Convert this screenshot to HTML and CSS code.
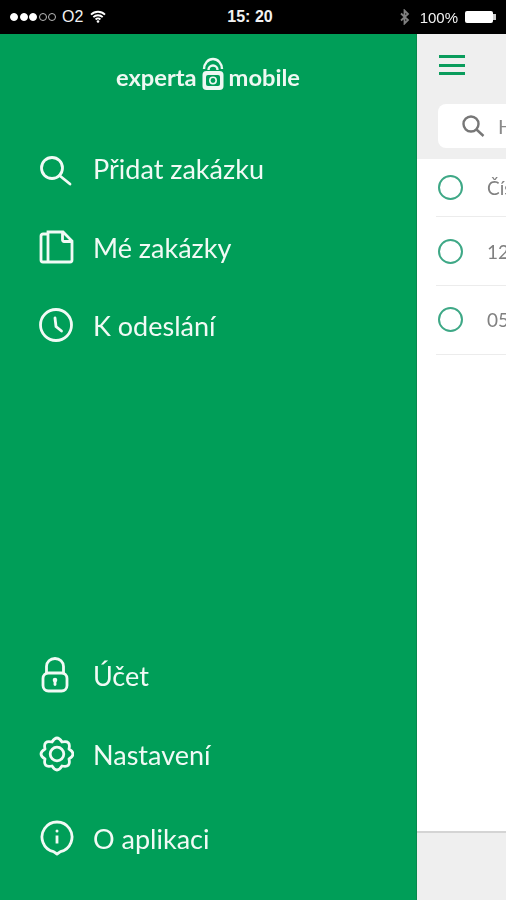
FILE: index.html
```html
<!DOCTYPE html>
<html lang="cs">
  <head>
    <meta charset="UTF-8" />
    <meta name="viewport" content="width=device-width, initial-scale=1.0" />
    <title>Experta mobile</title>
    <link rel="stylesheet" href="styles.css">
  </head>
  <body>
    <header class="status">
      <div class="status-left">
        <span class="signal"><i class="on"></i><i class="on"></i><i class="on"></i><i></i><i></i></span>
        <span class="carrier">O2</span>
        <svg class="wifi" viewBox="0 0 16 13" width="16" height="13"><path d="M1 4.6a10 10 0 0 1 14 0M3.3 7.2a6.6 6.6 0 0 1 9.4 0M5.6 9.5a3.4 3.4 0 0 1 4.8 0" fill="none" stroke="#fff" stroke-width="1.8"/><circle cx="8" cy="11.5" r="1.3" fill="#fff"/></svg>
      </div>
      <div class="status-time">15: 20</div>
      <div class="status-right">
        <svg class="bt" viewBox="0 0 10 16" width="10" height="16"><path d="M1 4.5l7 6.5-3.5 3.5V1.5L8 5l-7 6.500" fill="none" stroke="#808080" stroke-width="1.8"/></svg>
        <span>100%</span>
        <span class="battery"></span>
      </div>
    </header>

    <div class="main">
      <aside class="drawer">
        <div class="logo">
          <span>experta</span>
          <svg viewBox="0 0 22 34" width="22" height="34"><path d="M2 12a9 10 0 0 1 18 0M6.500 13a4.500 4.500 0 0 1 9 0" fill="none" stroke="#eef8f2" stroke-width="2.4"/><rect x="0.5" y="14" width="21" height="19" rx="4" fill="#eef8f2"/><rect x="4" y="18" width="14" height="11" rx="2" fill="#009e58"/><circle cx="11" cy="23.500" r="3.200" fill="none" stroke="#eef8f2" stroke-width="1.6"/></svg>
          <span>mobile</span>
        </div>

        <nav class="menu menu-top">
          <a class="menu-item">
            <svg viewBox="0 0 36 36" width="36" height="36"><circle cx="14" cy="18" r="10.500"/><path d="M21.500 25.500l10.500 8.500"/></svg>
            Přidat zakázku
          </a>
          <a class="menu-item">
            <svg viewBox="0 0 36 36" width="36" height="36"><path d="M10 5H5a2 2 0 0 0-2 2v24a2 2 0 0 0 2 2h27a2 2 0 0 0 2-2V12l-9-9H10v30M24.500 3v8a1.500 1.500 0 0 0 1.500 1.500h8"/></svg>
            Mé zakázky
          </a>
          <a class="menu-item item-clock">
            <svg viewBox="0 0 36 36" width="36" height="36"><circle cx="18" cy="18" r="15.500"/><path d="M17 11l1 8.500 5.500 4.500"/></svg>
            K odeslání
          </a>
        </nav>

        <nav class="menu menu-bottom">
          <a class="menu-item item-lock">
            <svg viewBox="0 0 36 36" width="36" height="36"><path d="M8.500 16V9.500a8.500 8 0 0 1 17 0V16"/><rect x="5" y="16" width="24" height="18" rx="5.500"/><circle cx="17" cy="23" r="2.300" class="fill"/><path d="M17 23v4.500"/></svg>
            Účet
          </a>
          <a class="menu-item item-gear">
            <svg viewBox="0 0 36 36" width="36" height="36"><path d="M14.030 6Q19 -2 23.970 6Q33.140 3.860 31 13.030Q39 18 31 22.970Q33.140 32.140 23.970 30Q19 38 14.030 30Q4.860 32.140 7 22.970Q-1 18 7 13.030Q4.860 3.860 14.030 6z" stroke-linejoin="round"/><circle cx="19" cy="18" r="6.800"/></svg>
            Nastavení
          </a>
          <a class="menu-item item-info">
            <svg viewBox="0 0 36 36" width="36" height="36"><path d="M19 34l-3.500-2.400A15 15 0 1 1 22.500 31.600z" stroke-linejoin="round"/><circle cx="19" cy="11" r="1.500" class="fill"/><path class="stem" d="M19 15.500v8"/></svg>
            O aplikaci
          </a>
        </nav>
      </aside>

      <section class="orders">
        <div class="toolbar">
          <div class="burger"><i></i><i></i><i></i></div>
          <div class="search">
            <svg viewBox="0 0 24 24" width="24" height="24"><circle cx="10" cy="10" r="7.500"/><path d="M15.500 15.500l7 6.500"/></svg>
            <span>H</span>
          </div>
        </div>
        <ul class="list">
          <li class="row row-head"><span class="radio"></span><span>Čís</span></li>
          <li class="row"><span class="radio"></span><span>12</span></li>
          <li class="row"><span class="radio"></span><span>05</span></li>
        </ul>
        <div class="bottom-bar"></div>
      </section>
    </div>
  </body>
</html>
```

FILE: styles.css
```css
*,
*::before,
*::after {
  box-sizing: border-box;
}

html,
body {
  margin: 0;
  height: 900px;
  overflow: hidden;
}

body {
  display: flex;
  flex-direction: column;
  font-family: 'Lato', sans-serif;
  background: #fff;
  filter: blur(0.6px);
}

.status {
  height: 34px;
  flex: none;
  background: #000;
  color: #f2f2f2;
  font-family: 'Liberation Sans', sans-serif;
  font-size: 15px;
  display: grid;
  grid-template-columns: 1fr auto 1fr;
  align-items: center;
  padding: 0 9px 0 10px;
}

.status-left,
.status-right {
  display: flex;
  align-items: center;
  gap: 6px;
}

.status-right {
  justify-content: flex-end;
  gap: 7px;
}

.signal {
  display: flex;
  gap: 1.5px;
}

.signal i {
  width: 8px;
  height: 8px;
  border-radius: 50%;
  border: 1px solid #bbb;
}

.signal i.on {
  background: #fff;
  border-color: #fff;
}

.carrier {
  font-size: 16px;
}

.wifi {
  margin-left: 1px;
  margin-top: -1px;
}

.status-time {
  font-weight: 700;
  font-size: 16px;
  margin-right: 7px;
}

.bt {
  margin-right: 3px;
}

.battery {
  position: relative;
  width: 28px;
  height: 12px;
  background: #fff;
  border-radius: 2px;
  margin-right: 4px;
}

.battery::after {
  content: '';
  position: absolute;
  left: 28px;
  top: 3px;
  width: 3px;
  height: 6px;
  background: #ccc;
}

.main {
  flex: 1;
  display: flex;
  min-height: 0;
}

.drawer {
  width: 417px;
  flex: none;
  background: #009e58;
  border-right: 1px solid #068a4e;
  color: #f1faf5;
  display: flex;
  flex-direction: column;
}

.logo {
  height: 56px;
  margin-top: 15px;
  display: flex;
  justify-content: center;
  align-items: center;
  gap: 5px;
  font-size: 23.7px;
  font-weight: 700;
  color: #eef8f2;
}

.logo svg {
  margin-top: -7px;
}

.menu {
  display: flex;
  flex-direction: column;
}

.menu-top {
  margin-top: 24px;
  gap: 1px;
}

.menu-bottom {
  margin-top: auto;
  padding-bottom: 20px;
}

.menu-item {
  height: 78px;
  padding-left: 38px;
  display: flex;
  align-items: center;
  gap: 19px;
  font-size: 27px;
  line-height: 1;
}

.menu-item svg {
  flex: none;
  fill: none;
  stroke: #f1faf5;
  stroke-width: 2.8;
  stroke-linecap: round;
}

.menu-item svg .fill {
  fill: #f1faf5;
  stroke: none;
}

.menu-item svg .stem {
  stroke-linecap: butt;
}

.item-clock {
  height: 76px;
}

.item-lock {
  height: 74px;
}

.item-gear,
.item-info {
  height: 84px;
}

.orders {
  flex: 1;
  display: flex;
  flex-direction: column;
  min-width: 0;
}

.toolbar {
  height: 125px;
  flex: none;
  background: #efefef;
  padding: 21px 0 0 22px;
}

.burger {
  width: 26px;
  display: flex;
  flex-direction: column;
  gap: 5.5px;
}

.burger i {
  height: 3px;
  background: #0a9c5c;
}

.search {
  margin-top: 29px;
  margin-left: -1px;
  height: 44px;
  width: 100px;
  background: #fff;
  border-radius: 8px;
  display: flex;
  align-items: center;
  gap: 13px;
  padding-left: 23px;
  color: #8a8a8a;
  font-size: 20px;
}

.search svg {
  flex: none;
  fill: none;
  stroke: #777;
  stroke-width: 2.4;
}

.list {
  list-style: none;
  margin: 0;
  padding: 0;
  flex: 1;
}

.row {
  height: 69px;
  margin-left: 19px;
  padding-left: 2px;
  border-bottom: 1px solid #ececec;
  display: flex;
  align-items: center;
  gap: 24px;
  color: #808080;
  font-size: 19px;
  overflow: hidden;
}

.row:last-child {
  padding-bottom: 2px;
}

.row-head {
  height: 58px;
}

.radio {
  flex: none;
  width: 25px;
  height: 25px;
  border-radius: 50%;
  border: 2px solid #3ea886;
}

.bottom-bar {
  height: 69px;
  flex: none;
  background: #efefef;
  border-top: 2px solid #d4d4d4;
}
```
